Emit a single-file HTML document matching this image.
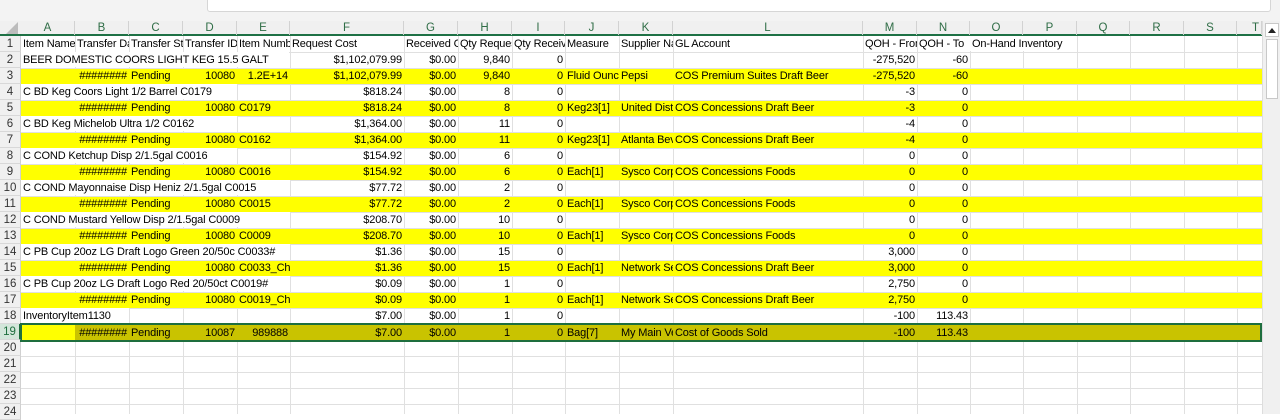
<!DOCTYPE html>
<html><head><meta charset="utf-8"><style>
*{margin:0;padding:0;box-sizing:border-box}
body{width:1280px;height:414px;overflow:hidden;background:#fff;position:relative;font-family:"Liberation Sans",sans-serif;font-size:11px;color:#000}
.top{position:absolute;left:0;top:0;width:1280px;height:21px;background:#f3f3f3}
.fx{position:absolute;left:207px;top:-1px;width:1064px;height:13px;background:#fff;border:1px solid #d6d6d6;border-radius:0 0 3px 3px}
.hdr{position:absolute;left:0;top:21px;width:1262px;height:15px;background:#f0f0f0;border-bottom:2px solid #1e7145}
.h{position:absolute;top:21px;height:14px;line-height:14px;text-align:center;color:#2f6d46;font-size:11.5px;border-right:1px solid #d2d2d2}
.rh{position:absolute;left:0;width:21px;height:16px;line-height:16px;text-align:center;background:#f0f0f0;color:#333;font-size:11.5px;border-bottom:1px solid #d8d8d8;border-right:1px solid #d0d0d0}
.v{position:absolute;top:36px;width:1px;height:378px;background:#e0e0e0;z-index:0}
.hl{position:absolute;left:21px;width:1241px;height:1px;background:#e0e0e0;z-index:0}
.y{position:absolute;left:21px;width:1241px;height:15px;background:#ffff00;z-index:1}
.row{position:absolute;left:0;width:1262px;height:16px;z-index:3}
.c{position:absolute;top:0;height:15px;line-height:16px;padding:0 2px;white-space:nowrap;overflow:hidden;letter-spacing:-0.15px}
.c.w{background-color:#ffffff}
.r{text-align:right}
.A{left:21px;width:54px}.B{left:75px;width:54px}.C{left:129px;width:54px}.D{left:183px;width:54px}.E{left:237px;width:53px}.F{left:290px;width:114px}.G{left:404px;width:54px}.H{left:458px;width:54px}.I{left:512px;width:53px}.J{left:565px;width:54px}.K{left:619px;width:54px}.L{left:673px;width:190px}.M{left:863px;width:54px}.N{left:917px;width:53px}.O{left:970px;width:53px}
.sb{position:absolute;left:1262px;top:21px;width:18px;height:393px;background:#f0f0f0;border-left:1px solid #ddd;z-index:5}
.sel{z-index:2}
</style></head><body>
<div class="top"><div class="fx"></div></div>
<div class="hdr"></div>
<div class="h" style="left:0;width:21px;border-right:none"><svg width="12" height="12" style="position:absolute;left:6px;top:1px"><polygon points="12,0 12,12 0,12" fill="#bcbcbc"/></svg></div>
<div class="h" style="left:21px;width:54px">A</div><div class="h" style="left:75px;width:54px">B</div><div class="h" style="left:129px;width:54px">C</div><div class="h" style="left:183px;width:54px">D</div><div class="h" style="left:237px;width:53px">E</div><div class="h" style="left:290px;width:114px">F</div><div class="h" style="left:404px;width:54px">G</div><div class="h" style="left:458px;width:54px">H</div><div class="h" style="left:512px;width:53px">I</div><div class="h" style="left:565px;width:54px">J</div><div class="h" style="left:619px;width:54px">K</div><div class="h" style="left:673px;width:190px">L</div><div class="h" style="left:863px;width:54px">M</div><div class="h" style="left:917px;width:53px">N</div><div class="h" style="left:970px;width:53px">O</div><div class="h" style="left:1023px;width:54px">P</div><div class="h" style="left:1077px;width:53px">Q</div><div class="h" style="left:1130px;width:54px">R</div><div class="h" style="left:1184px;width:53px">S</div><div class="h" style="left:1237px;width:25px;text-align:right;padding-right:2px">T</div>

<div class="v" style="left:75px"></div><div class="v" style="left:129px"></div><div class="v" style="left:183px"></div><div class="v" style="left:237px"></div><div class="v" style="left:290px"></div><div class="v" style="left:404px"></div><div class="v" style="left:458px"></div><div class="v" style="left:512px"></div><div class="v" style="left:565px"></div><div class="v" style="left:619px"></div><div class="v" style="left:673px"></div><div class="v" style="left:863px"></div><div class="v" style="left:917px"></div><div class="v" style="left:970px"></div><div class="v" style="left:1023px"></div><div class="v" style="left:1077px"></div><div class="v" style="left:1130px"></div><div class="v" style="left:1184px"></div><div class="v" style="left:1237px"></div>
<div class="hl" style="top:52px"></div><div class="hl" style="top:68px"></div><div class="hl" style="top:84px"></div><div class="hl" style="top:100px"></div><div class="hl" style="top:116px"></div><div class="hl" style="top:132px"></div><div class="hl" style="top:148px"></div><div class="hl" style="top:164px"></div><div class="hl" style="top:180px"></div><div class="hl" style="top:196px"></div><div class="hl" style="top:212px"></div><div class="hl" style="top:228px"></div><div class="hl" style="top:244px"></div><div class="hl" style="top:260px"></div><div class="hl" style="top:276px"></div><div class="hl" style="top:292px"></div><div class="hl" style="top:308px"></div><div class="hl" style="top:324px"></div><div class="hl" style="top:340px"></div><div class="hl" style="top:356px"></div><div class="hl" style="top:372px"></div><div class="hl" style="top:388px"></div><div class="hl" style="top:404px"></div>

<div class="y" style="top:69px"></div><div class="y" style="top:101px"></div><div class="y" style="top:133px"></div><div class="y" style="top:165px"></div><div class="y" style="top:197px"></div><div class="y" style="top:229px"></div><div class="y" style="top:261px"></div><div class="y" style="top:293px"></div>
<div class="sel" style="position:absolute;left:75px;top:324px;width:1187px;height:17px;background:#c9c300"></div>
<div class="sel" style="position:absolute;left:21px;top:324px;width:54px;height:17px;background:#ffff00"></div>
<div class="sel" style="position:absolute;left:20px;top:323px;width:1242px;height:19px;border:2px solid #1e6e3e"></div>

<div class="rh" style="top:36px">1</div><div class="rh" style="top:52px">2</div><div class="rh" style="top:68px">3</div><div class="rh" style="top:84px">4</div><div class="rh" style="top:100px">5</div><div class="rh" style="top:116px">6</div><div class="rh" style="top:132px">7</div><div class="rh" style="top:148px">8</div><div class="rh" style="top:164px">9</div><div class="rh" style="top:180px">10</div><div class="rh" style="top:196px">11</div><div class="rh" style="top:212px">12</div><div class="rh" style="top:228px">13</div><div class="rh" style="top:244px">14</div><div class="rh" style="top:260px">15</div><div class="rh" style="top:276px">16</div><div class="rh" style="top:292px">17</div><div class="rh" style="top:308px">18</div><div class="rh" style="top:324px;background:#d3e6da;color:#1e6e3e;border-right:2px solid #1e6e3e;z-index:4">19</div><div class="rh" style="top:340px">20</div><div class="rh" style="top:356px">21</div><div class="rh" style="top:372px">22</div><div class="rh" style="top:388px">23</div><div class="rh" style="top:404px">24</div>

<div class="row" style="top:36px">
<div class="c A">Item Name</div><div class="c B">Transfer Date</div><div class="c C">Transfer Status</div><div class="c D">Transfer ID</div><div class="c E">Item Number</div><div class="c F">Request Cost</div><div class="c G">Received Cost</div><div class="c H">Qty Requested</div><div class="c I">Qty Received</div><div class="c J">Measure</div><div class="c K">Supplier Name</div><div class="c L">GL Account</div><div class="c M">QOH - From</div><div class="c N">QOH - To</div><div class="c O w" style="width:106px">On-Hand Inventory</div></div>
<div class="row" style="top:52px">
<div class="c A w" style="width:268px">BEER DOMESTIC COORS LIGHT KEG 15.5 GALT</div><div class="c F r">$1,102,079.99</div><div class="c G r">$0.00</div><div class="c H r">9,840</div><div class="c I r">0</div><div class="c M r">-275,520</div><div class="c N r">-60</div></div>
<div class="row" style="top:68px">
<div class="c B r">########</div><div class="c C">Pending</div><div class="c D r">10080</div><div class="c E r">1.2E+14</div><div class="c F r">$1,102,079.99</div><div class="c G r">$0.00</div><div class="c H r">9,840</div><div class="c I r">0</div><div class="c J">Fluid Ounce</div><div class="c K">Pepsi</div><div class="c L">COS Premium Suites Draft Beer</div><div class="c M r">-275,520</div><div class="c N r">-60</div></div>
<div class="row" style="top:84px">
<div class="c A w" style="width:216px">C BD Keg Coors Light 1/2 Barrel C0179</div><div class="c F r">$818.24</div><div class="c G r">$0.00</div><div class="c H r">8</div><div class="c I r">0</div><div class="c M r">-3</div><div class="c N r">0</div></div>
<div class="row" style="top:100px">
<div class="c B r">########</div><div class="c C">Pending</div><div class="c D r">10080</div><div class="c E">C0179</div><div class="c F r">$818.24</div><div class="c G r">$0.00</div><div class="c H r">8</div><div class="c I r">0</div><div class="c J">Keg23[1]</div><div class="c K">United Distributors</div><div class="c L">COS Concessions Draft Beer</div><div class="c M r">-3</div><div class="c N r">0</div></div>
<div class="row" style="top:116px">
<div class="c A w" style="width:216px">C BD Keg Michelob Ultra 1/2 C0162</div><div class="c F r">$1,364.00</div><div class="c G r">$0.00</div><div class="c H r">11</div><div class="c I r">0</div><div class="c M r">-4</div><div class="c N r">0</div></div>
<div class="row" style="top:132px">
<div class="c B r">########</div><div class="c C">Pending</div><div class="c D r">10080</div><div class="c E">C0162</div><div class="c F r">$1,364.00</div><div class="c G r">$0.00</div><div class="c H r">11</div><div class="c I r">0</div><div class="c J">Keg23[1]</div><div class="c K">Atlanta Beverage</div><div class="c L">COS Concessions Draft Beer</div><div class="c M r">-4</div><div class="c N r">0</div></div>
<div class="row" style="top:148px">
<div class="c A w" style="width:216px">C COND Ketchup Disp 2/1.5gal C0016</div><div class="c F r">$154.92</div><div class="c G r">$0.00</div><div class="c H r">6</div><div class="c I r">0</div><div class="c M r">0</div><div class="c N r">0</div></div>
<div class="row" style="top:164px">
<div class="c B r">########</div><div class="c C">Pending</div><div class="c D r">10080</div><div class="c E">C0016</div><div class="c F r">$154.92</div><div class="c G r">$0.00</div><div class="c H r">6</div><div class="c I r">0</div><div class="c J">Each[1]</div><div class="c K">Sysco Corp</div><div class="c L">COS Concessions Foods</div><div class="c M r">0</div><div class="c N r">0</div></div>
<div class="row" style="top:180px">
<div class="c A w" style="width:269px">C COND Mayonnaise Disp Heniz 2/1.5gal C0015</div><div class="c F r">$77.72</div><div class="c G r">$0.00</div><div class="c H r">2</div><div class="c I r">0</div><div class="c M r">0</div><div class="c N r">0</div></div>
<div class="row" style="top:196px">
<div class="c B r">########</div><div class="c C">Pending</div><div class="c D r">10080</div><div class="c E">C0015</div><div class="c F r">$77.72</div><div class="c G r">$0.00</div><div class="c H r">2</div><div class="c I r">0</div><div class="c J">Each[1]</div><div class="c K">Sysco Corp</div><div class="c L">COS Concessions Foods</div><div class="c M r">0</div><div class="c N r">0</div></div>
<div class="row" style="top:212px">
<div class="c A w" style="width:269px">C COND Mustard Yellow Disp 2/1.5gal C0009</div><div class="c F r">$208.70</div><div class="c G r">$0.00</div><div class="c H r">10</div><div class="c I r">0</div><div class="c M r">0</div><div class="c N r">0</div></div>
<div class="row" style="top:228px">
<div class="c B r">########</div><div class="c C">Pending</div><div class="c D r">10080</div><div class="c E">C0009</div><div class="c F r">$208.70</div><div class="c G r">$0.00</div><div class="c H r">10</div><div class="c I r">0</div><div class="c J">Each[1]</div><div class="c K">Sysco Corp</div><div class="c L">COS Concessions Foods</div><div class="c M r">0</div><div class="c N r">0</div></div>
<div class="row" style="top:244px">
<div class="c A w" style="width:269px">C PB Cup 20oz LG Draft Logo Green 20/50c C0033#</div><div class="c F r">$1.36</div><div class="c G r">$0.00</div><div class="c H r">15</div><div class="c I r">0</div><div class="c M r">3,000</div><div class="c N r">0</div></div>
<div class="row" style="top:260px">
<div class="c B r">########</div><div class="c C">Pending</div><div class="c D r">10080</div><div class="c E">C0033_Chg</div><div class="c F r">$1.36</div><div class="c G r">$0.00</div><div class="c H r">15</div><div class="c I r">0</div><div class="c J">Each[1]</div><div class="c K">Network Services</div><div class="c L">COS Concessions Draft Beer</div><div class="c M r">3,000</div><div class="c N r">0</div></div>
<div class="row" style="top:276px">
<div class="c A w" style="width:269px">C PB Cup 20oz LG Draft Logo Red 20/50ct C0019#</div><div class="c F r">$0.09</div><div class="c G r">$0.00</div><div class="c H r">1</div><div class="c I r">0</div><div class="c M r">2,750</div><div class="c N r">0</div></div>
<div class="row" style="top:292px">
<div class="c B r">########</div><div class="c C">Pending</div><div class="c D r">10080</div><div class="c E">C0019_Chg</div><div class="c F r">$0.09</div><div class="c G r">$0.00</div><div class="c H r">1</div><div class="c I r">0</div><div class="c J">Each[1]</div><div class="c K">Network Services</div><div class="c L">COS Concessions Draft Beer</div><div class="c M r">2,750</div><div class="c N r">0</div></div>
<div class="row" style="top:308px">
<div class="c A w" style="width:108px">InventoryItem1130</div><div class="c F r">$7.00</div><div class="c G r">$0.00</div><div class="c H r">1</div><div class="c I r">0</div><div class="c M r">-100</div><div class="c N r">113.43</div></div>
<div class="row" style="top:325px">
<div class="c B r">########</div><div class="c C">Pending</div><div class="c D r">10087</div><div class="c E r">989888</div><div class="c F r">$7.00</div><div class="c G r">$0.00</div><div class="c H r">1</div><div class="c I r">0</div><div class="c J">Bag[7]</div><div class="c K">My Main Vendor</div><div class="c L">Cost of Goods Sold</div><div class="c M r">-100</div><div class="c N r">113.43</div></div>

<div class="sb"><div style="position:absolute;left:2px;top:2px;width:14px;height:14px;background:#fff;border:1px solid #c8c8c8"></div><svg width="8" height="5" style="position:absolute;left:5px;top:7px"><polygon points="0,5 8,5 4,0" fill="#222"/></svg><div style="position:absolute;left:3px;top:18px;width:12px;height:60px;background:#fff;border:1px solid #c8c8c8"></div></div>
</body></html>
